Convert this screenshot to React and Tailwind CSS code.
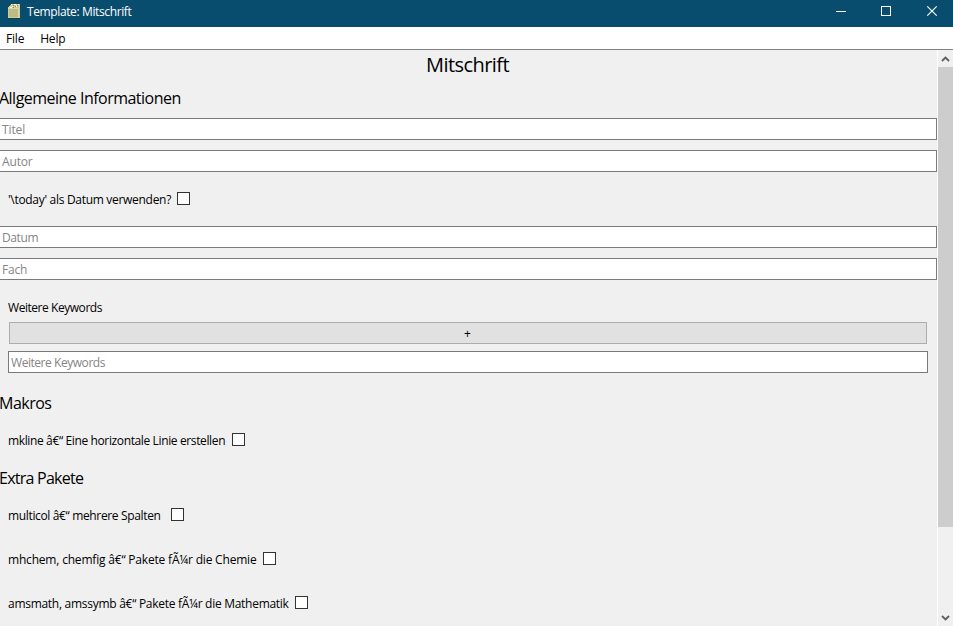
import React from "react";

const FONT = "font-['Open_Sans','Noto_Sans',sans-serif]";

function Field({ label, className }) {
  return (
    <div className={`flex h-[22px] shrink-0 items-center border border-[#7a7a7a] bg-white pt-[2px] text-[12px] leading-[18px] text-[#858585] ${className}`}>
      {label}
    </div>
  );
}

function Heading({ children, className }) {
  return <h2 className={`shrink-0 whitespace-pre text-[16px] leading-5 ${className}`}>{children}</h2>;
}

function CheckRow({ label, width, tracking, className }) {
  return (
    <label className={`flex h-[13px] shrink-0 items-center pl-2 ${className}`}>
      <span className={`shrink-0 whitespace-pre pt-[3px] leading-[14px] ${width} ${tracking}`}>{label}</span>
      <span className="h-[13px] w-[13px] border border-[#333] bg-white" />
    </label>
  );
}

function TitleBar() {
  return (
    <header className="flex h-[27px] shrink-0 items-center bg-[#084c6e] pl-2 text-white">
      <svg width="13" height="16" viewBox="0 0 13 16" className="-mt-[5px]" shapeRendering="crispEdges">
        <path d="M0 5L3 1H12V14L11 15H0Z" fill="#cfca98" />
        <path d="M1 6H10V14H1Z" fill="#bfba86" />
        <path d="M0 5h11v1H0zM10 6h1v9h-1z" fill="#dcd8ab" />
        <path d="M3 1h1v1H3zM6 1h2v1H6zM10 1h1v1h-1zM4 3h1v1H4zM8 2h1v2H8zM2 4h2v1H2z" fill="#fffbe0" />
        <path d="M5 2h1v1H5zM7 3h1v1H7zM9 2h1v1H9zM5 4h1v1H5z" fill="#8e8b58" />
        <path d="M0 15h12v1H0z" fill="#123f50" />
      </svg>
      <span className="ml-[6px] -mt-[3px] whitespace-pre tracking-[-0.38px]">Template: Mitschrift</span>
      <svg width="117" height="27" viewBox="0 0 117 27" className="ml-auto" fill="none" stroke="white">
        <path d="M0 11.5H10" shapeRendering="crispEdges" />
        <path d="M45.5 6.5H54.5V15.5H45.5Z" shapeRendering="crispEdges" />
        <path d="M91.3 6.3L100.7 15.7M100.7 6.3L91.3 15.7" strokeWidth="1.2" />
      </svg>
    </header>
  );
}

function ScrollBar() {
  return (
    <aside className="flex w-4 shrink-0 flex-col border-l border-white bg-[#f0f0f0]">
      <svg width="15" height="17" viewBox="0 0 15 17" className="shrink-0" fill="none" stroke="#606060" strokeWidth="1.9">
        <path d="M4 11L7.5 7.5L11 11" />
      </svg>
      <div className="h-[460px] shrink-0 bg-[#cdcdcd]" />
      <svg width="15" height="17" viewBox="0 0 15 17" className="mt-auto shrink-0" fill="none" stroke="#606060" strokeWidth="1.9">
        <path d="M4 7L7.5 10.5L11 7" />
      </svg>
    </aside>
  );
}

export default function App() {
  return (
    <div className={`flex h-[626px] w-[953px] flex-col overflow-hidden bg-[#f0f0f0] text-[12px] text-black ${FONT}`}>
      <TitleBar />
      <nav className="flex h-[23px] shrink-0 items-center gap-4 border-b border-[#838383] bg-white pl-[6px] tracking-[-0.2px]">
        <span className="pt-px">File</span>
        <span className="pt-px">Help</span>
      </nav>
      <div className="flex min-h-0 flex-1">
        <main className="flex w-[937px] flex-col overflow-hidden">
          <h1 className="mt-px h-7 shrink-0 pl-[426px] text-[20px] leading-7 tracking-[-0.55px]">Mitschrift</h1>
          <Heading className="mt-[9px] -ml-px tracking-[-0.52px]">Allgemeine Informationen</Heading>
          <Field label="Titel" className="mt-[10px] border-l-0 pl-[2px] tracking-[-0.1px]" />
          <Field label="Autor" className="mt-[10px] border-l-0 pl-[2px] tracking-[-0.15px]" />
          <CheckRow label="'\today' als Datum verwenden?" width="w-[169px]" tracking="tracking-[-0.3px]" className="mt-5" />
          <Field label="Datum" className="mt-[21px] border-l-0 pl-[2px] tracking-[-0.4px]" />
          <Field label="Fach" className="mt-[10px] border-l-0 pl-[2px] tracking-[-0.2px]" />
          <div className="mt-5 h-4 shrink-0 pl-2 leading-4 tracking-[-0.45px]">Weitere Keywords</div>
          <button className="mt-[6px] ml-[9px] flex h-[22px] w-[918px] shrink-0 items-center justify-center border border-[#adadad] bg-[#e1e1e1] pt-px pr-px leading-5">+</button>
          <Field label="Weitere Keywords" className="mt-[7px] ml-2 w-[920px] pl-[2px] tracking-[-0.45px]" />
          <Heading className="mt-5 -ml-px tracking-[-0.5px]">Makros</Heading>
          <CheckRow label="mkline â€“ Eine horizontale Linie erstellen" width="w-[224px]" tracking="tracking-[-0.37px]" className="mt-5" />
          <Heading className="mt-[22px] -ml-px tracking-[-0.75px]">Extra Pakete</Heading>
          <CheckRow label="multicol â€“ mehrere Spalten" width="w-[163px]" tracking="tracking-[-0.35px]" className="mt-5" />
          <CheckRow label="mhchem, chemfig â€“ Pakete fÃ¼r die Chemie" width="w-[255px]" tracking="tracking-[-0.19px]" className="mt-[31px]" />
          <CheckRow label="amsmath, amssymb â€“ Pakete fÃ¼r die Mathematik" width="w-[287px]" tracking="tracking-[-0.28px]" className="mt-[31px]" />
        </main>
        <ScrollBar />
      </div>
    </div>
  );
}
